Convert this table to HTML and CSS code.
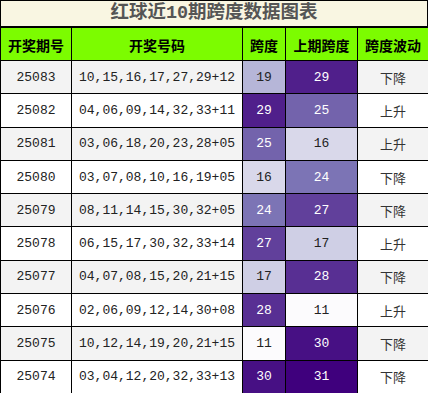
FILE: index.html
```html
<!DOCTYPE html>
<html lang="zh">
<head>
<meta charset="utf-8">
<title>红球近10期跨度数据图表</title>
<link rel="stylesheet" href="styles.css">
</head>
<body>
<div class="chart">
  <div class="chart-title">红球近10期跨度数据图表</div>
  <table class="span-table">
    <colgroup>
      <col class="c-issue"><col class="c-nums"><col class="c-span"><col class="c-prev"><col class="c-trend">
    </colgroup>
    <thead>
      <tr><th>开奖期号</th><th>开奖号码</th><th>跨度</th><th>上期跨度</th><th>跨度波动</th></tr>
    </thead>
    <tbody>
      <tr class="alt"><td>25083</td><td>10,15,16,17,27,29+12</td><td style="background:#b6b6d8">19</td><td class="dark" style="background:#501f8b">29</td><td class="trend">下降</td></tr>
      <tr><td>25082</td><td>04,06,09,14,32,33+11</td><td class="dark" style="background:#501f8b">29</td><td class="dark" style="background:#7363ac">25</td><td class="trend">上升</td></tr>
      <tr class="alt"><td>25081</td><td>03,06,18,20,23,28+05</td><td class="dark" style="background:#7363ac">25</td><td style="background:#d9d8ea">16</td><td class="trend">上升</td></tr>
      <tr><td>25080</td><td>03,07,08,10,16,19+05</td><td style="background:#d9d8ea">16</td><td class="dark" style="background:#7c74b5">24</td><td class="trend">下降</td></tr>
      <tr class="alt"><td>25079</td><td>08,11,14,15,30,32+05</td><td class="dark" style="background:#7c74b5">24</td><td class="dark" style="background:#61409b">27</td><td class="trend">下降</td></tr>
      <tr><td>25078</td><td>06,15,17,30,32,33+14</td><td class="dark" style="background:#61409b">27</td><td style="background:#cfcfe5">17</td><td class="trend">上升</td></tr>
      <tr class="alt"><td>25077</td><td>04,07,08,15,20,21+15</td><td style="background:#cfcfe5">17</td><td class="dark" style="background:#582f93">28</td><td class="trend">下降</td></tr>
      <tr><td>25076</td><td>02,06,09,12,14,30+08</td><td class="dark" style="background:#582f93">28</td><td style="background:#fcfbfd">11</td><td class="trend">上升</td></tr>
      <tr class="alt"><td>25075</td><td>10,12,14,19,20,21+15</td><td style="background:#fcfbfd">11</td><td class="dark" style="background:#471084">30</td><td class="trend">下降</td></tr>
      <tr><td>25074</td><td>03,04,12,20,32,33+13</td><td class="dark" style="background:#471084">30</td><td class="dark" style="background:#3f007d">31</td><td class="trend">下降</td></tr>
    </tbody>
  </table>
</div>
</body>
</html>
```
FILE: styles.css
```css
html, body {
  margin: 0;
  padding: 0;
  background: #ffffff;
}
.chart {
  width: 428px;
  font-family: "Liberation Mono", "Noto Sans CJK SC", monospace;
}
.chart-title {
  height: 25px;
  line-height: 25px;
  border: 1px solid #000;
  background: #f9f6e2;
  color: #555555;
  font-size: 18.5px;
  font-weight: bold;
  text-align: center;
}
.span-table {
  width: 428px;
  border-collapse: collapse;
  table-layout: fixed;
}
.c-issue { width: 71px; }
.c-nums { width: 171px; }
.c-span { width: 43px; }
.c-prev { width: 72px; }
.c-trend { width: 71px; }
.span-table th,
.span-table td {
  border: 1px solid #000;
  padding: 0;
  text-align: center;
}
.span-table th {
  background: #7cfc00;
  height: 33px;
  font-size: 14px;
  font-weight: bold;
  color: #000;
  font-family: "Noto Sans CJK SC", "Liberation Mono", sans-serif;
  padding-top: 2px;
  box-sizing: border-box;
}
.span-table td {
  height: 32.3px;
  font-size: 13px;
  color: #222;
  background: #ffffff;
}
.span-table tr.alt td {
  background: #f3f3f3;
}
.span-table td.dark {
  color: #ffffff;
}
.span-table td.trend {
  font-family: "Noto Sans CJK SC", sans-serif;
  color: #333;
}
```
